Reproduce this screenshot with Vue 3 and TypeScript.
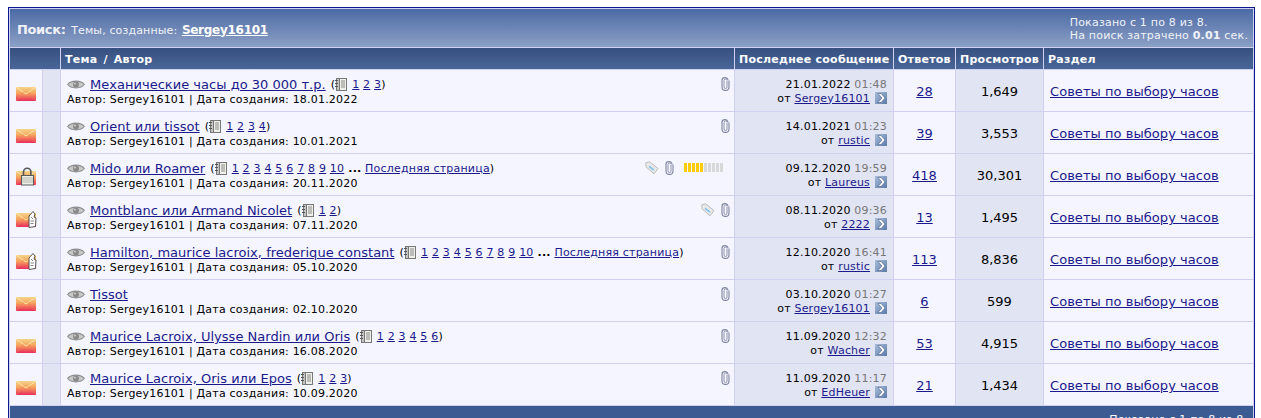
<script setup lang="ts">
interface Topic {
  icon: 'mail' | 'lock' | 'hot'
  title: string
  pages: number
  lastPage?: boolean
  created: string
  tag?: boolean
  rating?: number
  date: string
  time: string
  by: string
  replies: string
  views: string
}

const topics: Topic[] = [
  { icon: 'mail', title: 'Механические часы до 30 000 т.р.', pages: 3, created: '18.01.2022', date: '21.01.2022', time: '01:48', by: 'Sergey16101', replies: '28', views: '1,649' },
  { icon: 'mail', title: 'Orient или tissot', pages: 4, created: '10.01.2021', date: '14.01.2021', time: '01:23', by: 'rustic', replies: '39', views: '3,553' },
  { icon: 'lock', title: 'Mido или Roamer', pages: 10, lastPage: true, created: '20.11.2020', tag: true, rating: 5, date: '09.12.2020', time: '19:59', by: 'Laureus', replies: '418', views: '30,301' },
  { icon: 'hot', title: 'Montblanc или Armand Nicolet', pages: 2, created: '07.11.2020', tag: true, date: '08.11.2020', time: '09:36', by: '2222', replies: '13', views: '1,495' },
  { icon: 'hot', title: 'Hamilton, maurice lacroix, frederique constant', pages: 10, lastPage: true, created: '05.10.2020', date: '12.10.2020', time: '16:41', by: 'rustic', replies: '113', views: '8,836' },
  { icon: 'mail', title: 'Tissot', pages: 0, created: '02.10.2020', date: '03.10.2020', time: '01:27', by: 'Sergey16101', replies: '6', views: '599' },
  { icon: 'mail', title: 'Maurice Lacroix, Ulysse Nardin или Oris', pages: 6, created: '16.08.2020', date: '11.09.2020', time: '12:32', by: 'Wacher', replies: '53', views: '4,915' },
  { icon: 'mail', title: 'Maurice Lacroix, Oris или Epos', pages: 3, created: '10.09.2020', date: '11.09.2020', time: '11:17', by: 'EdHeuer', replies: '21', views: '1,434' },
]
</script>

<template>
  <div class="frame">
    <table class="list">
      <colgroup>
        <col style="width: 32px" />
        <col style="width: 17px" />
        <col style="width: 673px" />
        <col style="width: 158px" />
        <col style="width: 61px" />
        <col style="width: 87px" />
        <col style="width: 209px" />
      </colgroup>
      <thead>
        <tr>
          <td colspan="7" class="title-bar">
            <div class="title-inner">
              <div class="title-left">
                <b class="title-big">Поиск:</b> Темы, созданные: <a href="#" class="title-user">Sergey16101</a>
              </div>
              <div class="title-right">
                Показано с 1 по 8 из 8.<br />
                На поиск затрачено <b>0.01</b> сек.
              </div>
            </div>
          </td>
        </tr>
        <tr class="heads">
          <th colspan="2"></th>
          <th class="head-topic">Тема / Автор</th>
          <th>Последнее сообщение</th>
          <th>Ответов</th>
          <th>Просмотров</th>
          <th>Раздел</th>
        </tr>
      </thead>
      <tbody>
        <tr v-for="(t, i) in topics" :key="t.title" class="row">
          <td class="c-icon">
            <svg width="22" height="20" viewBox="0 0 22 20" class="env">
              <defs>
                <linearGradient :id="`env${i}`" x1="0" y1="0" x2="0" y2="1">
                  <stop offset="0" stop-color="#f3d58a" />
                  <stop offset="0.45" stop-color="#f7a35c" />
                  <stop offset="1" stop-color="#e92c5c" />
                </linearGradient>
              </defs>
              <rect x="1" y="4" width="20" height="14" :fill="`url(#env${i})`" />
              <path d="M1 4 L11 11 L21 4" fill="none" stroke="#fbe6a8" stroke-width="1" />
              <path d="M1 18 L8.5 9.5 M21 18 L13.5 9.5" fill="none" stroke="#ef7a62" stroke-width="0.7" />
              <g v-if="t.icon === 'lock'">
                <path d="M8.5 9 V5 a3.7 3.7 0 0 1 7.4 0 V9" fill="none" stroke="#55585a" stroke-width="1.6" />
                <rect x="6.5" y="8.5" width="12" height="9.5" fill="#f0f0ea" stroke="#5a5d5a" stroke-width="1" />
                <path d="M7 11 h11 M7 13 h11 M7 15 h11" stroke="#b4b6ac" stroke-width="1" />
              </g>
              <g v-if="t.icon === 'hot'">
                <path d="M14 7 L18 2.5 L20 5 L19 8 L21 9 L20.5 17.5 L14 18.5 Z" fill="#fff" stroke="#444" stroke-width="0.9" />
                <path d="M16 8 L18 10 M15.5 12 h3.5 M15.5 14.5 h3" stroke="#666" stroke-width="0.8" />
              </g>
            </svg>
          </td>
          <td class="c-alt"></td>
          <td class="c-topic">
            <div class="topic-wrap">
              <div class="topic-main">
                <div class="topic-line">
                  <svg class="eye" width="18" height="11" viewBox="0 0 18 11">
                    <path d="M0.7 5.5 C4 1 14 1 17.3 5.5 C14 10 4 10 0.7 5.5 Z" fill="#c9c9c9" stroke="#8b8b8b" stroke-width="1.1" />
                    <circle cx="9" cy="5.5" r="3" fill="#8a8a8a" />
                    <circle cx="8" cy="4.6" r="0.9" fill="#d9d9d9" />
                  </svg>
                  <a href="#" class="topic-link">{{ t.title }}</a>
                  <span v-if="t.pages" class="pages">
                    (<svg class="pageicon" width="12" height="13" viewBox="0 0 12 13">
                      <rect x="1.5" y="0.5" width="10" height="12" fill="#f0f0ea" stroke="#777" />
                      <rect x="1.5" y="0.5" width="3" height="12" fill="#c4c4c4" stroke="#777" />
                      <path d="M6 3 h4 M6 5 h4 M6 7 h4 M6 9 h4" stroke="#888" />
                      <path d="M0 2.5 h3 M0 5.5 h3 M0 8.5 h3" stroke="#555" />
                    </svg>
                    <template v-for="n in t.pages" :key="n"><a href="#" class="page">{{ n }}</a>{{ n < t.pages ? ' ' : '' }}</template>
                    <template v-if="t.lastPage"><span class="dots">...</span> <a href="#" class="page">Последняя страница</a></template>)
                  </span>
                </div>
                <div class="author">Автор: Sergey16101 | Дата создания: {{ t.created }}</div>
              </div>
              <div class="topic-meta">
                <svg v-if="t.tag" class="tag" width="14" height="14" viewBox="0 0 14 14">
                  <path d="M0.8 1.8 L4.5 0.8 L13 7.5 L9 12.8 L1 5.8 Z" fill="#e9e9e9" stroke="#bcbcbc" />
                  <path d="M4.5 4.5 L9.5 8.5 L8.5 10 L3.5 6 Z" fill="#8cc4ec" />
                </svg>
                <svg class="clip" width="9" height="14" viewBox="0 0 9 14">
                  <path d="M6 4 V10 a1.5 1.5 0 0 1 -3 0 V3.5 a1.5 1.5 0 0 1 3 0" fill="none" stroke="#8f94ac" stroke-width="1" />
                  <path d="M8 3.5 V10 a3.5 3.4 0 0 1 -7 0 V3.2 a3 2.6 0 0 1 6 0" fill="none" stroke="#7c849e" stroke-width="1.1" />
                </svg>
                <div v-if="t.rating" class="rating">
                  <i v-for="n in 10" :key="n" :class="{ on: n <= t.rating }"></i>
                </div>
              </div>
            </div>
          </td>
          <td class="c-last">
            <div>{{ t.date }} <span class="time">{{ t.time }}</span></div>
            <div class="by">от <a href="#" class="user">{{ t.by }}</a>
              <svg class="go" width="12" height="12" viewBox="0 0 12 12">
                <defs>
                  <linearGradient :id="`go${i}`" x1="0" y1="0" x2="1" y2="1">
                    <stop offset="0" stop-color="#a9bdd9" />
                    <stop offset="1" stop-color="#5b7aa8" />
                  </linearGradient>
                </defs>
                <rect width="12" height="12" :fill="`url(#go${i})`" />
                <path d="M3 1.5 L6 1.5 L10 6 L6 10.5 L3 10.5 L7 6 Z" fill="#fff" stroke="#3a4f78" stroke-width="0.5" />
              </svg>
            </div>
          </td>
          <td class="c-center"><a href="#" class="num">{{ t.replies }}</a></td>
          <td class="c-center alt">{{ t.views }}</td>
          <td class="c-board"><a href="#" class="board">Советы по выбору часов</a></td>
        </tr>
      </tbody>
      <tfoot>
        <tr>
          <td colspan="7" class="foot">Показано с 1 по 8 из 8.</td>
        </tr>
      </tfoot>
    </table>
  </div>
</template>

<style scoped>
.frame {
  margin: 7px 6px 0 8px;
  border: 1px solid #0b198c;
  background: #fff;
  font-family: "DejaVu Sans", Verdana, sans-serif;
  font-size: 11px;
  letter-spacing: 0.2px;
  color: #000;
}

.list {
  width: 1245px;
  table-layout: fixed;
  border-collapse: separate;
  border-spacing: 1px;
  background: #d0d0f0;
}

.list td,
.list th {
  padding: 0;
}

a {
  color: #1a1a8c;
}

.title-bar {
  height: 38px;
  background: linear-gradient(#4b6aa5, #8ca0c5);
  color: #f0f2f8;
}

.title-inner {
  display: flex;
  justify-content: space-between;
  align-items: center;
  padding: 2px 5px 0 7px;
}

.title-left {
  letter-spacing: 0.13px;
}

.title-big {
  font-size: 13px;
  letter-spacing: -0.35px;
  margin-right: 2px;
}

.title-user {
  color: #fff;
  font-size: 12px;
  font-weight: bold;
  letter-spacing: -0.27px;
  margin-left: 1px;
}

.title-right {
  line-height: 13px;
  white-space: nowrap;
}

.heads th {
  box-sizing: border-box;
  height: 21px;
  background: linear-gradient(#36507f, #4a6699);
  color: #fff;
  font-size: 11px;
  font-weight: bold;
  text-align: left;
  padding: 2px 4px 0;
  white-space: nowrap;
  letter-spacing: 0.25px;
}

.heads .head-topic {
  word-spacing: 2px;
}

.row td {
  box-sizing: border-box;
  height: 41px;
  background: #f5f5ff;
  vertical-align: middle;
}

.row .c-icon {
  vertical-align: top;
}

.env {
  display: block;
  margin: 13px 0 0 5px;
}

.row .c-alt,
.row .alt,
.row .c-last {
  background: #e1e4f2;
}

.row .c-topic {
  padding: 0 4px 0 6px;
  vertical-align: top;
}

.topic-wrap {
  display: flex;
  justify-content: space-between;
  align-items: flex-start;
}

.topic-line {
  display: flex;
  align-items: center;
  height: 15px;
  margin-top: 7px;
  white-space: nowrap;
}

.eye {
  margin-right: 5px;
  flex: none;
}

.topic-link {
  font-size: 13px;
  letter-spacing: 0.02px;
}

.pages {
  margin-left: 5px;
  white-space: nowrap;
}

.pageicon {
  vertical-align: -3px;
  margin-right: 5px;
}

.dots {
  font-weight: bold;
  margin-left: 4px;
}

.author {
  margin-top: 1px;
  line-height: 14px;
}

.topic-meta {
  display: flex;
  align-items: flex-start;
  gap: 6px;
  padding-top: 7px;
}

.rating {
  display: flex;
  margin: 2px 6px 0 4px;
}

.rating i {
  display: block;
  width: 3px;
  height: 9px;
  margin-right: 1px;
  background: #d8d8d8;
}

.rating i.on {
  background: #ffcc00;
}

.row .c-last {
  text-align: right;
  padding: 2px 6px 0 0;
  line-height: 14px;
  white-space: nowrap;
}

.time {
  color: #777;
}

.go {
  vertical-align: -2px;
  margin-left: 5px;
}

.row .c-center {
  text-align: center;
  font-size: 13px;
  letter-spacing: 0;
  padding-top: 2px;
}

.row .c-board {
  padding: 2px 0 0 6px;
}

.board {
  font-size: 13px;
  letter-spacing: 0.05px;
}

.num {
  font-size: 13px;
}

.foot {
  background: #3c5b92;
  color: #fff;
  text-align: right;
  padding: 6px 6px 6px 0 !important;
  height: 14px;
}
</style>

<style>
html,
body {
  overflow: hidden;
  background: #fff;
}
</style>
